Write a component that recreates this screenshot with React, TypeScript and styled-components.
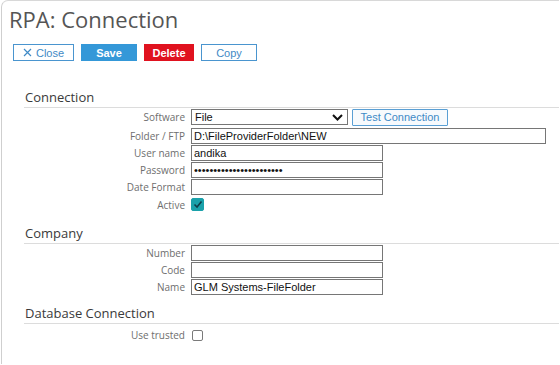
import React from "react";
import styled, { createGlobalStyle } from "styled-components";

const GlobalStyle = createGlobalStyle`
  html, body {
    margin: 0;
    padding: 0;
    background: #ffffff;
  }
  body {
    font-family: "Open Sans", "Liberation Sans", sans-serif;
  }
`;

const Panel = styled.div`
  width: 558px;
  height: 364px;
  margin-left: 1px;
  border-top: 1px solid #d8d8d8;
  border-left: 1px solid #cfcfcf;
  border-top-left-radius: 7px;
  box-sizing: border-box;
  overflow: hidden;
`;

const Title = styled.h1`
  margin: 0;
  padding: 3px 0 0 7px;
  font-family: "Open Sans", sans-serif;
  font-weight: 400;
  font-size: 22px;
  line-height: 30px;
  color: #555555;
`;

const Toolbar = styled.div`
  display: flex;
  gap: 7px;
  padding: 10px 0 0 11px;
`;

type Variant = "outline" | "primary" | "danger";

const Button = styled.button<{ $variant: Variant; $w: number }>`
  box-sizing: border-box;
  width: ${(p) => p.$w}px;
  height: 17px;
  padding: 0;
  display: flex;
  align-items: center;
  justify-content: center;
  gap: 4px;
  font-family: "Liberation Sans", Arial, sans-serif;
  font-size: 11px;
  font-weight: ${(p) => (p.$variant === "outline" ? 400 : 700)};
  border: 1px solid
    ${(p) =>
      p.$variant === "danger" ? "#e0121f" : p.$variant === "primary" ? "#3498d8" : "#4a95cf"};
  background: ${(p) =>
    p.$variant === "danger" ? "#e0121f" : p.$variant === "primary" ? "#3498d8" : "#ffffff"};
  color: ${(p) => (p.$variant === "outline" ? "#3f8ac6" : "#ffffff")};
  cursor: pointer;
`;

const Content = styled.div`
  padding: 28px 0 0 22px;
`;

const Section = styled.section<{ $top: number }>`
  margin-top: ${(p) => p.$top}px;
`;

const Heading = styled.h2`
  margin: 0;
  padding: 0 0 1px 1px;
  font-family: "Open Sans", sans-serif;
  font-weight: 400;
  font-size: 13px;
  line-height: 17px;
  color: #3a3a3a;
  border-bottom: 1px solid #dcdcdc;
`;

const Form = styled.div`
  display: grid;
  grid-template-columns: 161px 1fr;
  column-gap: 6px;
  row-gap: 1px;
  margin-top: 1px;
`;

const Label = styled.label<{ $h?: number }>`
  height: ${(p) => p.$h ?? 16}px;
  display: flex;
  align-items: center;
  justify-content: flex-end;
  font-family: "Open Sans", sans-serif;
  font-size: 10px;
  color: #6e6e6e;
  white-space: nowrap;
`;

const Field = styled.div<{ $h?: number; $mb?: number }>`
  height: ${(p) => p.$h ?? 16}px;
  margin-bottom: ${(p) => p.$mb ?? 0}px;
  display: flex;
  align-items: center;
  gap: 4px;
`;

const TextInput = styled.input<{ $w: number }>`
  box-sizing: border-box;
  width: ${(p) => p.$w}px;
  height: 16px;
  margin: 0;
  padding: 0 2px;
  border: 1px solid #767676;
  border-radius: 0;
  font-family: "Liberation Sans", Arial, sans-serif;
  font-size: 11px;
  color: #111111;
  background: #ffffff;
  outline: none;
`;

const Select = styled.div`
  box-sizing: border-box;
  width: 157px;
  height: 16px;
  padding: 0 4px 0 3px;
  display: flex;
  align-items: center;
  justify-content: space-between;
  border: 1px solid #767676;
  font-family: "Liberation Sans", Arial, sans-serif;
  font-size: 11px;
  color: #111111;
`;

const TestButton = styled.button`
  box-sizing: border-box;
  width: 96px;
  height: 17px;
  padding: 0;
  border: 1px solid #5a9fd4;
  border-radius: 1px;
  background: #f7fafd;
  color: #3f8ac6;
  font-family: "Liberation Sans", Arial, sans-serif;
  font-size: 11px;
`;

const Check = styled.span<{ $on: boolean }>`
  box-sizing: border-box;
  width: ${(p) => (p.$on ? 13 : 11)}px;
  height: ${(p) => (p.$on ? 13 : 11)}px;
  margin-left: ${(p) => (p.$on ? 0 : 1)}px;
  display: inline-flex;
  align-items: center;
  justify-content: center;
  border-radius: 2px;
  border: 1px solid ${(p) => (p.$on ? "#1aa1aa" : "#7a7a7a")};
  background: ${(p) => (p.$on ? "#1aa1aa" : "#ffffff")};
`;

const Chevron = () => (
  <svg width="11" height="7" viewBox="0 0 11 7">
    <path d="M1 1 L5.5 5.5 L10 1" fill="none" stroke="#111" strokeWidth="2" />
  </svg>
);

const Tick = () => (
  <svg width="10" height="9" viewBox="0 0 10 9">
    <path d="M1.5 4.5 L4 7 L8.5 1.5" fill="none" stroke="#0f3d4a" strokeWidth="1.6" />
  </svg>
);

const XMark = () => (
  <svg width="9" height="9" viewBox="0 0 9 9">
    <path d="M1 1 L8 8 M8 1 L1 8" stroke="#3f8ac6" strokeWidth="1.2" />
  </svg>
);

const App: React.FC = () => {
  return (
    <>
      <GlobalStyle />
      <Panel>
        <Title>RPA: Connection</Title>
        <Toolbar>
          <Button $variant="outline" $w={61}>
            <XMark />
            Close
          </Button>
          <Button $variant="primary" $w={56}>Save</Button>
          <Button $variant="danger" $w={50}>Delete</Button>
          <Button $variant="outline" $w={56}>Copy</Button>
        </Toolbar>

        <Content>
          <Section $top={0}>
            <Heading>Connection</Heading>
            <Form>
              <Label>Software</Label>
              <Field $mb={2}>
                <Select>
                  File
                  <Chevron />
                </Select>
                <TestButton>Test Connection</TestButton>
              </Field>
              <Label>Folder / FTP</Label>
              <Field>
                <TextInput $w={355} readOnly value="D:\FileProviderFolder\NEW" />
              </Field>
              <Label>User name</Label>
              <Field>
                <TextInput $w={192} readOnly value="andika" />
              </Field>
              <Label>Password</Label>
              <Field>
                <TextInput $w={192} type="password" readOnly value="xxxxxxxxxxxxxxxxxxxxxxx" />
              </Field>
              <Label>Date Format</Label>
              <Field>
                <TextInput $w={192} readOnly value="" />
              </Field>
              <Label $h={17}>Active</Label>
              <Field $h={17}>
                <Check $on>
                  <Tick />
                </Check>
              </Field>
            </Form>
          </Section>

          <Section $top={12}>
            <Heading>Company</Heading>
            <Form>
              <Label>Number</Label>
              <Field>
                <TextInput $w={192} readOnly value="" />
              </Field>
              <Label>Code</Label>
              <Field>
                <TextInput $w={192} readOnly value="" />
              </Field>
              <Label>Name</Label>
              <Field>
                <TextInput $w={192} readOnly value="GLM Systems-FileFolder" />
              </Field>
            </Form>
          </Section>

          <Section $top={10}>
            <Heading>Database Connection</Heading>
            <Form>
              <Label $h={20}>Use trusted</Label>
              <Field $h={20}>
                <Check $on={false} />
              </Field>
            </Form>
          </Section>
        </Content>
      </Panel>
    </>
  );
};

export default App;
